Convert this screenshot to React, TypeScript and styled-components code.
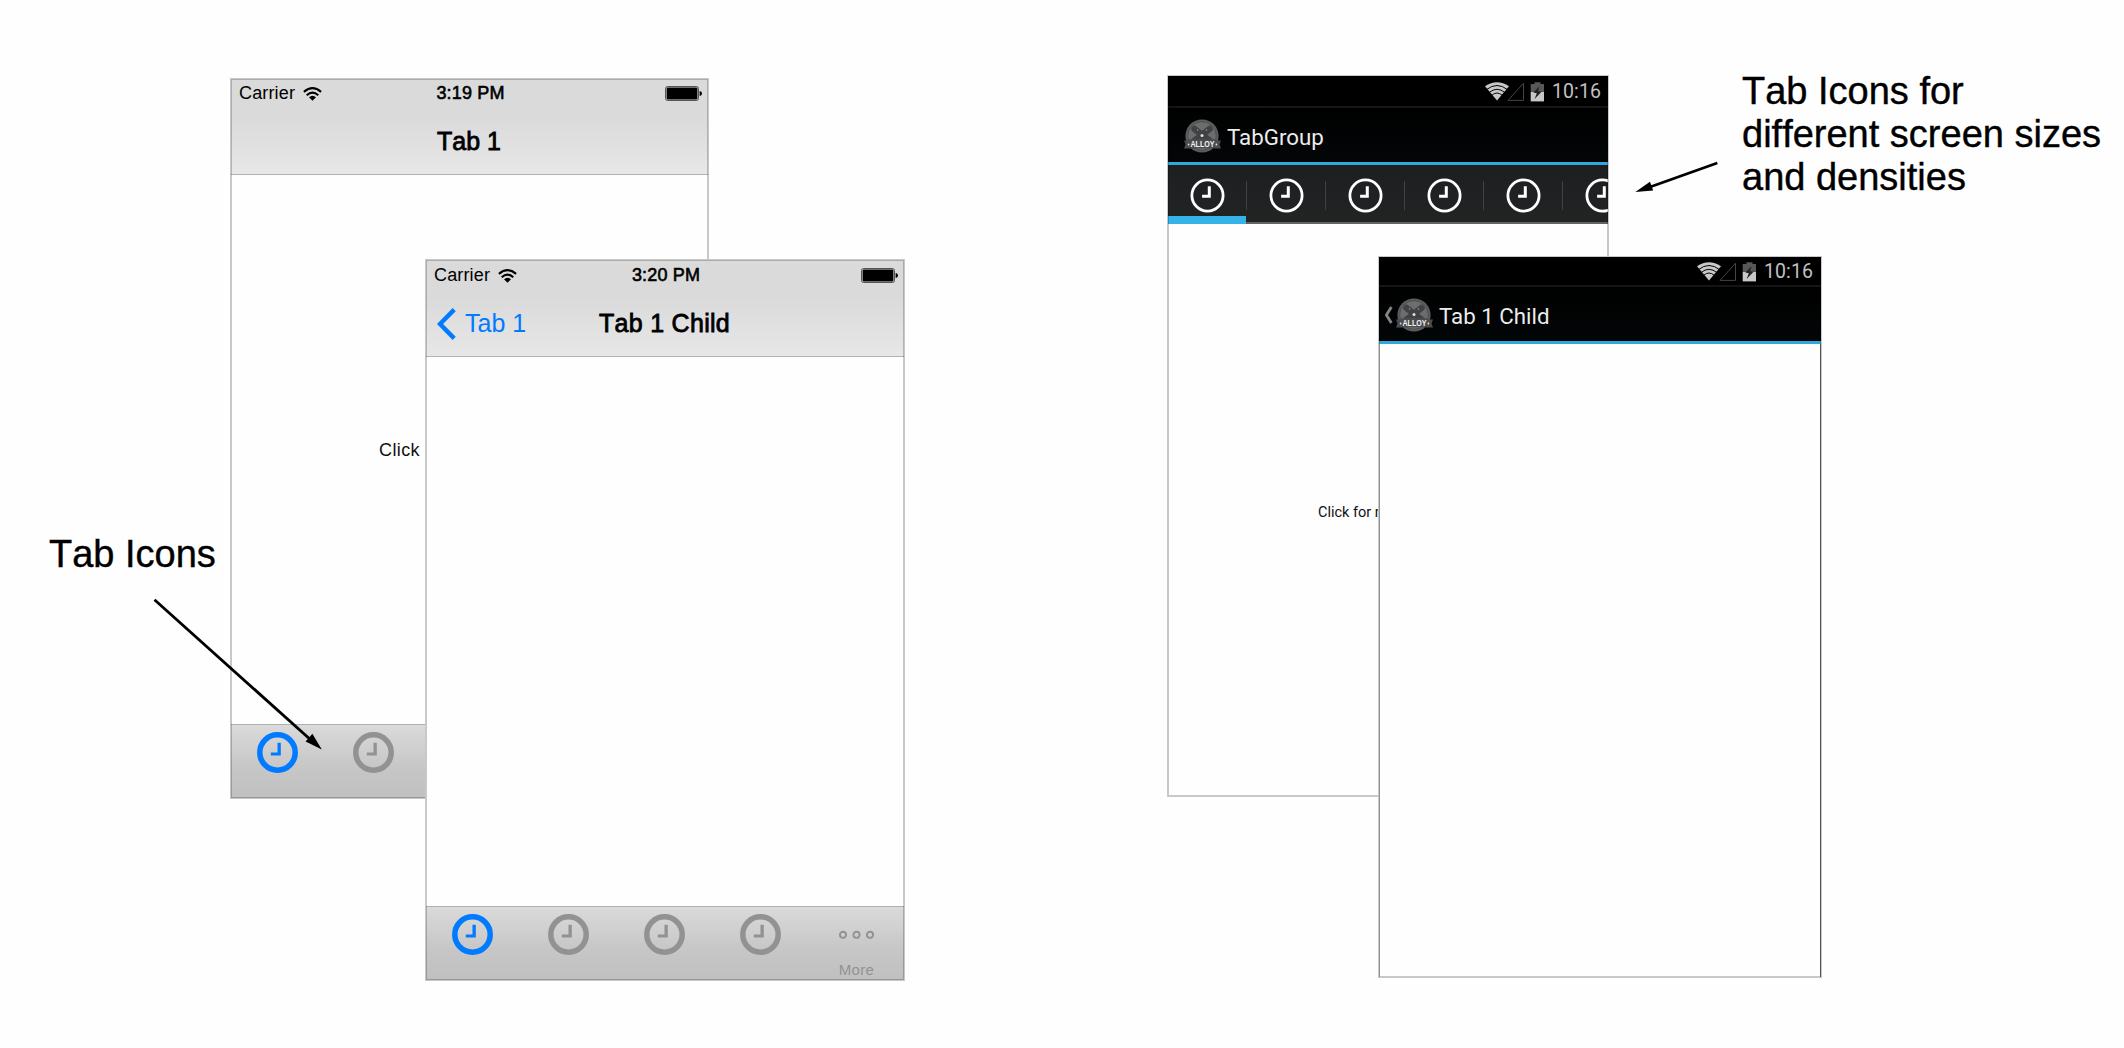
import React from "react";
import styled, { createGlobalStyle } from "styled-components";

const BLUE = "#007aff";
const GRAY = "#929292";

const GlobalStyle = createGlobalStyle`
  * { box-sizing: border-box; }
  body { margin: 0; background: #fefefe; }
`;

const Canvas = styled.main`
  position: relative;
  width: 2124px;
  height: 1048px;
  overflow: hidden;
  background: #fefefe;
  font-family: "Liberation Sans", Arial, sans-serif;
  color: #000;
`;

const Phone = styled.section<{ $x: number; $y: number; $w: number; $h: number }>`
  position: absolute;
  left: ${(p) => p.$x}px;
  top: ${(p) => p.$y}px;
  width: ${(p) => p.$w}px;
  height: ${(p) => p.$h}px;
  padding: 1px;
  background: #fefefe;
  display: flex;
  flex-direction: column;
  overflow: hidden;
  &::after {
    content: "";
    position: absolute;
    inset: 0;
    border: 2px solid rgba(0, 0, 0, 0.21);
    pointer-events: none;
  }
`;

const IosHeader = styled.header`
  flex: none;
  background: linear-gradient(#dadada 0%, #dadada 38%, #e7e7e7 100%);
  border-bottom: 1px solid #b2b2b2;
`;

const IosStatus = styled.div<{ $h: number }>`
  height: ${(p) => p.$h}px;
  padding: 0 6px 0 8px;
  display: grid;
  grid-template-columns: 1fr auto 1fr;
  align-items: center;
  font-size: 18px;
  line-height: ${(p) => p.$h}px;
`;

const Carrier = styled.div`
  display: flex;
  align-items: center;
  gap: 8px;
  letter-spacing: 0.15px;
`;

const Clock = styled.time`
  letter-spacing: 0.15px;
  -webkit-text-stroke: 0.6px #000;
`;

const BatterySlot = styled.div`
  display: flex;
  justify-content: flex-end;
`;

const IosNav = styled.div<{ $h: number }>`
  height: ${(p) => p.$h}px;
  padding: 0 12px 0 11px;
  display: grid;
  grid-template-columns: 1fr auto 1fr;
  align-items: center;
  font-size: 25px;
  line-height: ${(p) => p.$h}px;
`;

const Back = styled.div`
  display: flex;
  align-items: center;
  gap: 9px;
  color: ${BLUE};
`;

const IosTitle = styled.h1`
  grid-column: 2;
  margin: 0;
  font-size: 25px;
  font-weight: 400;
  font-kerning: none;
  -webkit-text-stroke: 0.8px #000;
`;

const ChildTitle = styled(IosTitle)`
  letter-spacing: 0.3px;
`;

const IosBody = styled.div`
  flex: 1;
  padding: 263px 0 0 148px;
  font-size: 18px;
  line-height: 24px;
  letter-spacing: 0.4px;
  color: #111;
`;

const IosTabs = styled.nav`
  flex: none;
  height: 74px;
  display: grid;
  grid-template-columns: repeat(5, 96px);
  border-top: 1px solid #b0b0b0;
  background: linear-gradient(#dadada 0%, #c6c6c6 60%, #c0c0c0 100%);
  overflow: hidden;
`;

const IosTab = styled.div`
  display: flex;
  flex-direction: column;
  align-items: center;
  padding: 7px 3px 0 0;
  font-size: 15px;
  color: ${GRAY};
`;

const MoreLabel = styled.span`
  line-height: 18px;
  margin-top: 6px;
  letter-spacing: 0.35px;
`;

const DroidStatus = styled.div<{ $h: number; $top: number; $right: number }>`
  flex: none;
  height: ${(p) => p.$h}px;
  padding: ${(p) => p.$top}px ${(p) => p.$right}px 0 0;
  display: flex;
  align-items: center;
  justify-content: flex-end;
  background: #000;
  border-bottom: 2px solid #151515;
  font: 19.5px/26px Roboto, sans-serif;
  color: #c2c2c2;
`;

const DroidTime = styled.time`
  margin-left: 7px;
  letter-spacing: 0.1px;
`;

const ActionBar = styled.header<{ $child?: boolean }>`
  flex: none;
  height: 57px;
  padding: 2px 0 0 ${(p) => (p.$child ? 5 : 16)}px;
  display: flex;
  align-items: center;
  background: linear-gradient(#000, #030607);
  border-bottom: 3px solid #2fa8dc;
  font: 22.3px/48px Roboto, sans-serif;
  color: #ececec;
`;

const ActionTitle = styled.h1`
  margin: 0 0 0 6px;
  padding-top: 1px;
  font: inherit;
`;

const DroidTabs = styled.nav`
  flex: none;
  height: 59px;
  display: flex;
  align-items: center;
  overflow: hidden;
  background: linear-gradient(#1d1e20, #222424);
  border-bottom: 2px solid #626364;
`;

const DroidTab = styled.div`
  flex: none;
  width: 79px;
  height: 29px;
  margin-top: 3px;
  border-right: 1px solid #3f4142;
  display: flex;
  align-items: center;
  justify-content: center;
`;

const TabsWrap = styled.div`
  flex: none;
  position: relative;
`;

const ActiveBar = styled.div`
  position: absolute;
  left: 0;
  bottom: 0;
  width: 78px;
  height: 8px;
  background: #35b3e8;
`;

const DroidBody = styled.div<{ $edged?: boolean }>`
  flex: 1;
  padding: 278px 0 0 150px;
  font: 14.5px/22px Roboto, sans-serif;
  white-space: nowrap;
  color: #111;
  border-left: ${(p) => (p.$edged ? "1px solid #b8b8b8" : "0")};
  border-right: ${(p) => (p.$edged ? "1px solid #6a6a6a" : "0")};
`;

const Note = styled.p<{ $x: number; $y: number }>`
  position: absolute;
  left: ${(p) => p.$x}px;
  top: ${(p) => p.$y}px;
  margin: 0;
  font-size: 38px;
  line-height: 43.2px;
  font-kerning: none;
  white-space: pre;
  -webkit-text-stroke: 0.4px #000;
`;

const Arrows = styled.svg`
  position: absolute;
  inset: 0;
  pointer-events: none;
`;

const IosWifi = () => (
  <svg width="19" height="14" viewBox="0 0 19 14" fill="none" stroke="#000" strokeWidth="2.1">
    <path d="M.9 4.9Q9.5-2.6 18.1 4.9" />
    <path d="M3.7 8.2Q9.5 3.1 15.3 8.2" />
    <path d="M6 10.3Q9.5 7.2 13 10.3L9.5 13.8Z" fill="#000" stroke="none" />
  </svg>
);

const IosBattery = () => (
  <svg width="37" height="15" viewBox="0 0 37 15">
    <rect x=".5" y=".5" width="33" height="14" rx="2" fill="#dadada" stroke="#555" />
    <rect x="1.6" y="1.6" width="30.8" height="11.8" rx="1" />
    <path d="M34.6 5Q37 5.2 37 7.5T34.6 10Z" />
  </svg>
);

const IosClock = ({ active }: { active?: boolean }) => (
  <svg width="41" height="41" viewBox="-20.5 -20.5 41 41">
    <circle r="17.7" fill="none" stroke={active ? BLUE : GRAY} strokeWidth="5.5" />
    <path d="M0-9.7H3.3V3.1H-6.7V.1H0Z" fill={active ? BLUE : GRAY} />
  </svg>
);

const MoreDots = () => (
  <svg width="41" height="41" viewBox="-20.5 -20.5 41 41" fill="none" stroke={GRAY} strokeWidth="1.9">
    <circle cx="-13.5" cy=".3" r="3.1" />
    <circle cx="0" cy=".3" r="3.1" />
    <circle cx="13.5" cy=".3" r="3.1" />
  </svg>
);

const BackChevron = () => (
  <svg width="19" height="32" viewBox="0 0 19 32" fill="none" stroke={BLUE} strokeWidth="4.4">
    <path d="M17.2 1.6L3 16L17.2 30.4" />
  </svg>
);

const DroidClock = () => (
  <svg width="35" height="35" viewBox="-17.5 -17.5 35 35">
    <circle r="15.6" fill="none" stroke="#fff" strokeWidth="2.8" />
    <path d="M.3-9.2H3.3V2.3H-5.4V-.8H.3Z" fill="#fff" />
  </svg>
);

const DroidIcons = () => (
  <svg width="60" height="20" viewBox="0 0 60 20">
    <path d="M0 4.2Q12-3.8 24 4.2L12 18.4Z" fill="#c8c8c8" />
    <g fill="none" stroke="#000" strokeWidth="1">
      <path d="M1.5 7.6Q12-.6 22.5 7.6" />
      <path d="M4 10.6Q12 4 20 10.6" />
      <path d="M6.6 13.4Q12 8.6 17.4 13.4" />
    </g>
    <path d="M23 18.4H38.5V1.2Z" fill="none" stroke="#444" />
    <path d="M45.7 2H49.5V.3H55.5V2H59V10H45.7Z" fill="#585858" />
    <path d="M45.7 10H59V19.4H45.7Z" fill="#c8c8c8" />
    <path d="M54.6 4.3L48.3 10.6L51.8 11.3L49.6 17L56.6 9.8L53 9.2Z" fill="#222" />
  </svg>
);

const Logo = styled.svg`
  flex: none;
  overflow: visible;
`;

const BadgeText = styled.text`
  font: 700 9px "Liberation Sans", sans-serif;
`;

const AlloyLogo = () => (
  <Logo width="37" height="34" viewBox="0 0 37 34">
    <circle cx="18" cy="17" r="16.6" fill="#5c5d5f" />
    <circle cx="18" cy="17" r="14.3" fill="#6c6d6f" stroke="#4c4d4f" strokeWidth=".9" />
    <g stroke="#414244" strokeWidth="6.4" strokeLinecap="round">
      <path d="M10.5 10L26 22" />
      <path d="M25.5 10L10 22" />
    </g>
    <circle cx="13.6" cy="11" r=".8" fill="#999" />
    <circle cx="22.4" cy="11" r=".8" fill="#999" />
    <circle cx="18" cy="16.6" r="1.5" fill="#e0e0e0" />
    <path d="M0 21.5H4L6 20.3H31L33 21.5H37L35.5 25.5L37 29.5H31L30 29.2H7L6 29.5H0L1.5 25.5Z" fill="#4b4c4e" />
    <circle cx="4.6" cy="25.5" r=".9" fill="#ddd" />
    <circle cx="32.4" cy="25.5" r=".9" fill="#ddd" />
    <BadgeText x="18.5" y="28.2" fill="#f4f4f4" textAnchor="middle" textLength="24" lengthAdjust="spacingAndGlyphs">
      ALLOY
    </BadgeText>
  </Logo>
);

const Caret = styled.svg`
  flex: none;
  margin-right: 3px;
`;

const UpCaret = () => (
  <Caret width="9" height="18" viewBox="0 0 9 18" fill="none" stroke="#858585" strokeWidth="2.8">
    <path d="M7.4 1L2.4 9L7.4 17" />
  </Caret>
);

function IosStatusBar({ time, height }: { time: string; height: number }) {
  return (
    <IosStatus $h={height}>
      <Carrier>
        Carrier <IosWifi />
      </Carrier>
      <Clock>{time}</Clock>
      <BatterySlot>
        <IosBattery />
      </BatterySlot>
    </IosStatus>
  );
}

function IosTabBar() {
  return (
    <IosTabs>
      {[0, 1, 2, 3].map((i) => (
        <IosTab key={i}>
          <IosClock active={i === 0} />
        </IosTab>
      ))}
      <IosTab>
        <MoreDots />
        <MoreLabel>More</MoreLabel>
      </IosTab>
    </IosTabs>
  );
}

function DroidStatusBar({ height, top, right }: { height: number; top: number; right: number }) {
  return (
    <DroidStatus $h={height} $top={top} $right={right}>
      <DroidIcons />
      <DroidTime>10:16</DroidTime>
    </DroidStatus>
  );
}

export default function App() {
  return (
    <>
      <GlobalStyle />
      <Canvas>
        <Phone $x={230} $y={78} $w={479} $h={721}>
          <IosHeader>
            <IosStatusBar time="3:19 PM" height={29} />
            <IosNav $h={66}>
              <IosTitle>Tab 1</IosTitle>
            </IosNav>
          </IosHeader>
          <IosBody>Click</IosBody>
          <IosTabBar />
        </Phone>

        <Phone $x={425} $y={259} $w={480} $h={722}>
          <IosHeader>
            <IosStatusBar time="3:20 PM" height={31} />
            <IosNav $h={65}>
              <Back>
                <BackChevron />
                Tab 1
              </Back>
              <ChildTitle>Tab 1 Child</ChildTitle>
            </IosNav>
          </IosHeader>
          <IosBody />
          <IosTabBar />
        </Phone>

        <Phone $x={1167} $y={75} $w={442} $h={722}>
          <DroidStatusBar height={32} top={2} right={7} />
          <ActionBar>
            <AlloyLogo />
            <ActionTitle>TabGroup</ActionTitle>
          </ActionBar>
          <TabsWrap>
            <DroidTabs>
              {[0, 1, 2, 3, 4, 5].map((i) => (
                <DroidTab key={i}>
                  <DroidClock />
                </DroidTab>
              ))}
            </DroidTabs>
            <ActiveBar />
          </TabsWrap>
          <DroidBody>Click for more</DroidBody>
        </Phone>

        <Phone $x={1378} $y={256} $w={444} $h={722}>
          <DroidStatusBar height={30} top={1} right={8} />
          <ActionBar $child>
            <UpCaret />
            <AlloyLogo />
            <ActionTitle>Tab 1 Child</ActionTitle>
          </ActionBar>
          <DroidBody $edged />
        </Phone>

        <Note $x={49} $y={533}>Tab Icons</Note>
        <Note $x={1742} $y={70}>{"Tab Icons for\ndifferent screen sizes\nand densities"}</Note>

        <Arrows width="2124" height="1048">
          <g stroke="#000" strokeWidth="2.8">
            <path d="M154.5 599.8L312 741" />
            <path d="M1717.3 163L1650 187" />
          </g>
          <path d="M321.8 749.6L305.6 741.4L312.4 733.8Z" />
          <path d="M1635.3 192L1650 181.8L1653.2 190.6Z" />
        </Arrows>
      </Canvas>
    </>
  );
}
